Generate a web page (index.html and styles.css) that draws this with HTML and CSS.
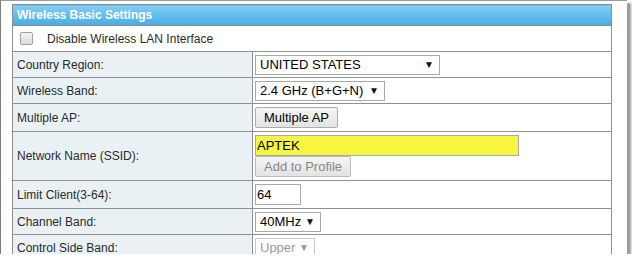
FILE: index.html
```html
<!DOCTYPE html>
<html lang="en">
<head>
    <meta charset="UTF-8">
    <title>Wireless Basic Settings</title>
    <link rel="stylesheet" href="styles.css">
</head>
<body>
    <div class="frame">
        <table class="settings">
            <tr>
                <th colspan="2" class="title">Wireless Basic Settings</th>
            </tr>
            <tr class="row-disable">
                <td colspan="2" class="plain">
                    <label class="check"><input type="checkbox"><span>Disable Wireless LAN Interface</span></label>
                </td>
            </tr>
            <tr class="row">
                <td class="label">Country Region:</td>
                <td class="value"><span class="select" style="width: 185px">UNITED STATES</span></td>
            </tr>
            <tr class="row">
                <td class="label">Wireless Band:</td>
                <td class="value"><span class="select" style="width: 130px">2.4 GHz (B+G+N)</span></td>
            </tr>
            <tr class="row tall">
                <td class="label">Multiple AP:</td>
                <td class="value"><button class="btn">Multiple AP</button></td>
            </tr>
            <tr class="row ssid">
                <td class="label">Network Name (SSID):</td>
                <td class="value">
                    <input class="text yellow" type="text" value="APTEK">
                    <button class="btn" disabled>Add to Profile</button>
                </td>
            </tr>
            <tr class="row tall">
                <td class="label">Limit Client(3-64):</td>
                <td class="value"><input class="text short" type="text" value="64"></td>
            </tr>
            <tr class="row">
                <td class="label">Channel Band:</td>
                <td class="value"><span class="select" style="width: 66px">40MHz</span></td>
            </tr>
            <tr class="row">
                <td class="label">Control Side Band:</td>
                <td class="value"><span class="select off" style="width: 60px">Upper</span></td>
            </tr>
        </table>
    </div>
</body>
</html>
```

FILE: styles.css
```css
body {
    margin: 0;
    background: #fff;
    font-family: 'Liberation Sans', Arial, sans-serif;
}
.frame {
    width: 627px;
    height: 254px;
    border-top: 1px solid #9a9a9a;
    border-left: 1px solid #7d7d7d;
    box-shadow: 4px 3px 2px 0 #9c9c9c;
    padding: 3px 0 0 11px;
    box-sizing: border-box;
    overflow: hidden;
    background: #fff;
}
.settings {
    width: 600px;
    border-collapse: collapse;
    font-size: 12px;
    color: #2a2a2a;
}
.settings td, .settings th {
    border: 1px solid #909090;
    padding: 0;
}
.title {
    height: 20px;
    background: linear-gradient(#83cef4, #45ade6);
    color: #fff;
    font-weight: bold;
    text-align: left;
    padding-left: 4px !important;
}
.row-disable td {
    height: 25px;
}
.check {
    display: flex;
    align-items: center;
    padding-left: 7px;
}
.check input {
    appearance: none;
    width: 13px;
    height: 13px;
    margin: 0 14px 0 0;
    border: 1px solid #a0a0a0;
    border-radius: 2px;
    background: linear-gradient(#f4f4f4, #dcdcdc);
}
.row td {
    height: 25px;
}
.row.tall td {
    height: 27px;
}
.row.ssid td {
    height: 48px;
}
.label {
    width: 235px;
    background: #e9f1f4;
    padding-left: 4px !important;
}
.value {
    padding-left: 2px !important;
}
.select {
    display: inline-flex;
    align-items: center;
    position: relative;
    box-sizing: border-box;
    height: 20px;
    padding-left: 4px;
    border: 1px solid #a9a9a9;
    background: #fff;
    font-size: 13px;
    color: #000;
    vertical-align: middle;
}
.select::after {
    content: "▼";
    position: absolute;
    right: 5px;
    top: 3px;
    font-size: 10px;
    color: #111;
}
.select.off {
    color: #9a9a9a;
    border-color: #c8c8c8;
}
.select.off::after {
    color: #9a9a9a;
}
.btn {
    display: block;
    height: 21px;
    padding: 0 8px;
    border: 1px solid #adadad;
    border-radius: 2px;
    background: linear-gradient(#f5f5f5, #e3e3e3);
    font-family: inherit;
    font-size: 13px;
    color: #000;
}
.btn:disabled {
    color: #888;
    border-color: #bcbcbc;
}
.text {
    display: block;
    box-sizing: border-box;
    height: 21px;
    padding: 0 1px;
    border: 1px solid #a9a9a9;
    font-family: inherit;
    font-size: 13px;
    color: #000;
    outline: none;
}
.yellow {
    width: 264px;
    background: #f5f542;
}
.short {
    width: 46px;
}
```
